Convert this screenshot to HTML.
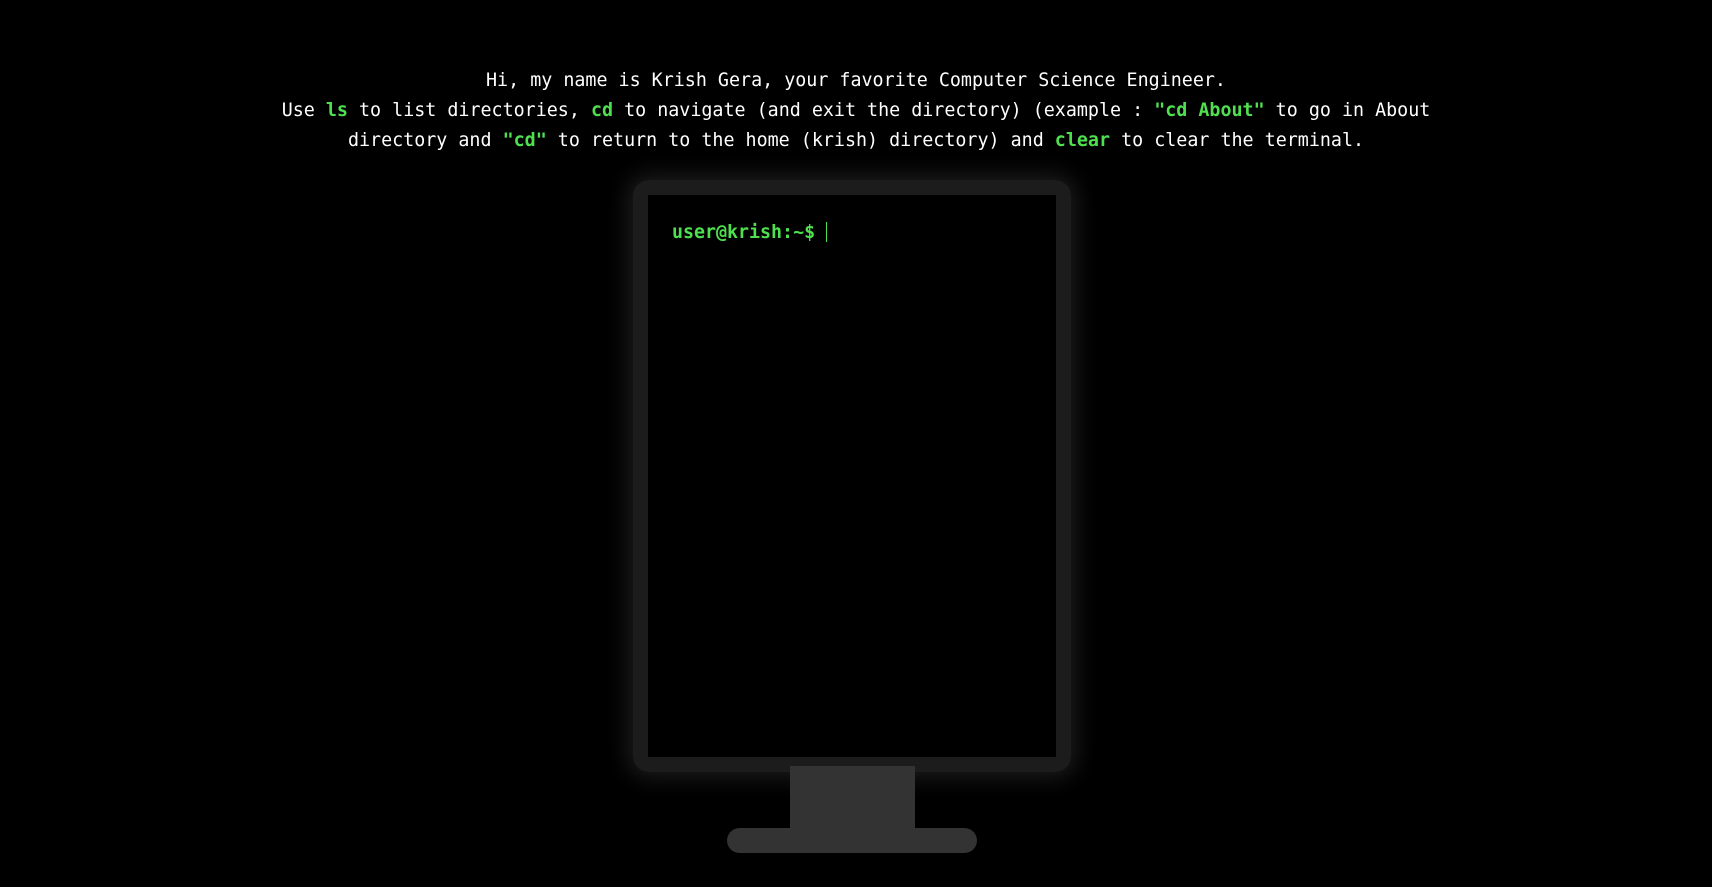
<!DOCTYPE html>
<html><head><style>
html,body{margin:0;background:#000;width:1712px;height:887px;overflow:hidden}
.intro{position:absolute;top:66px;left:0;width:1712px;text-align:center;color:#fff;font:18.35px/30px "DejaVu Sans Mono","Liberation Mono",monospace;white-space:nowrap}
.g{color:#4fe04f;font-weight:bold}
.frame{position:absolute;left:633px;top:180px;width:438px;height:592px;background:#1c1c1c;border-radius:16px;box-shadow:0 0 22px 6px rgba(60,60,60,.45)}
.screen{position:absolute;left:15px;top:15px;width:408px;height:562px;background:#000}
.prompt{position:absolute;left:24px;top:26px;color:#4fe04f;font:bold 18.3px/24px "DejaVu Sans Mono","Liberation Mono",monospace}
.cur{display:inline-block;width:1px;height:20px;background:#4fe04f;vertical-align:-4px;margin-left:11px}
.stand{position:absolute;left:790px;top:766px;width:125px;height:64px;background:#333}
.base{position:absolute;left:727px;top:828px;width:250px;height:25px;background:#333;border-radius:13px}
</style></head><body>
<div class="intro">Hi, my name is Krish Gera, your favorite Computer Science Engineer.<br>Use <span class="g">ls</span> to list directories, <span class="g">cd</span> to navigate (and exit the directory) (example : <span class="g">"cd About"</span> to go in About<br>directory and <span class="g">"cd"</span> to return to the home (krish) directory) and <span class="g">clear</span> to clear the terminal.</div>
<div class="frame"><div class="screen"><div class="prompt">user@krish:~$<span class="cur"></span></div></div></div>
<div class="stand"></div>
<div class="base"></div>
</body></html>
